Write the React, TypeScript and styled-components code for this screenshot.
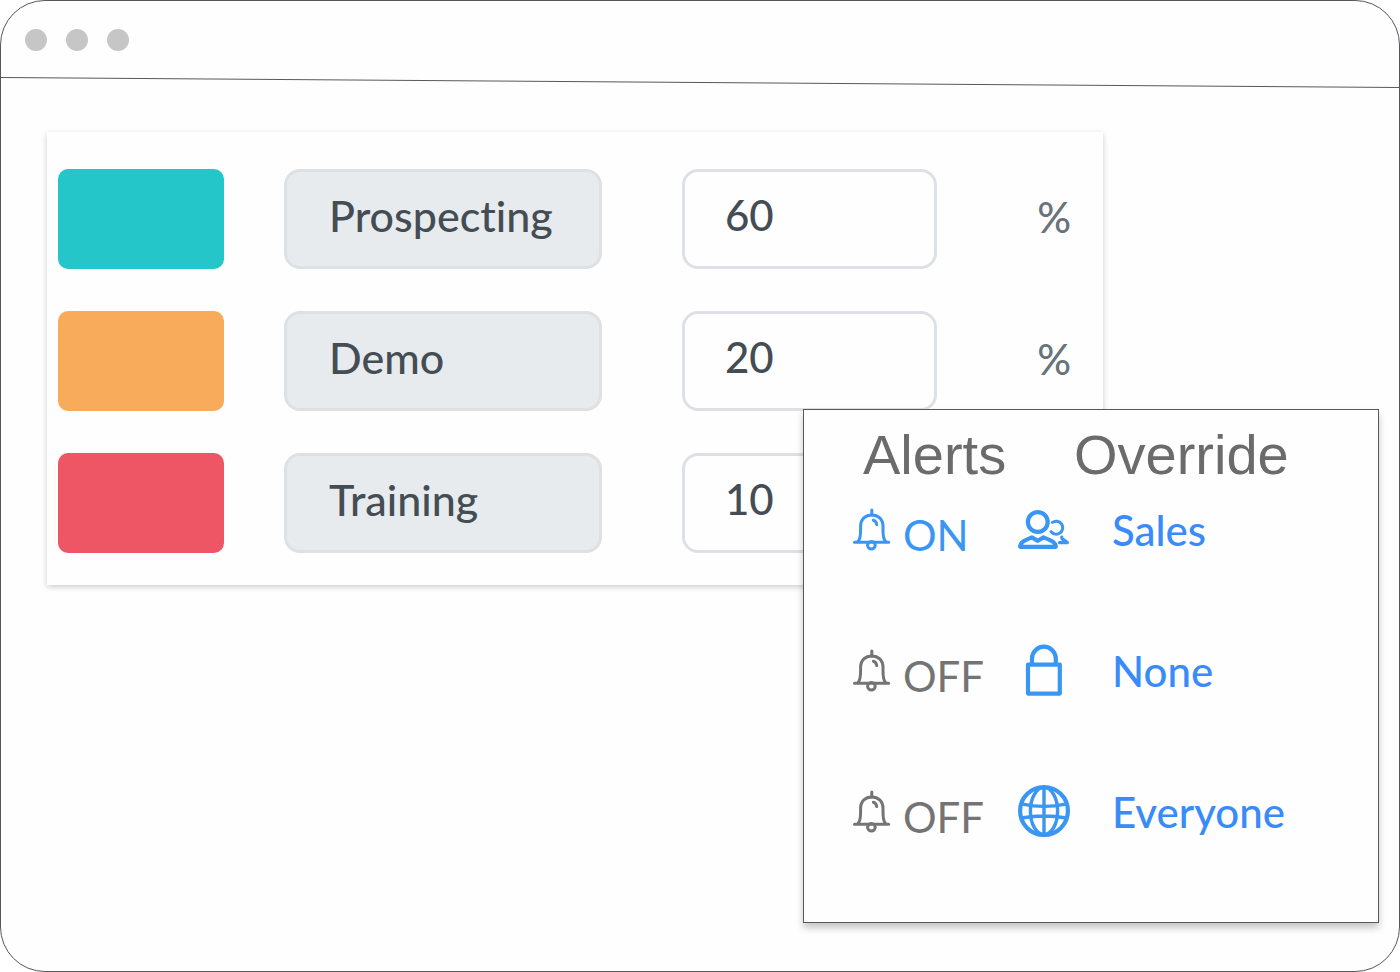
import React, { useState } from "react";
import styled, { createGlobalStyle } from "styled-components";

const GlobalStyle = createGlobalStyle`
  * { box-sizing: border-box; }
  body { margin: 0; background: #fff; }
  button, input { font: inherit; margin: 0; }
`;

const BLUE = "#3996f3";
const LINK = "#3a8bfa";
const GREY = "#747474";

const Window = styled.div`
  position: relative;
  display: flex;
  flex-direction: column;
  min-height: 100vh;
  border: 1px solid #58585a;
  border-radius: 45px;
  background: #fefefe;
  font-family: Lato, "Liberation Sans", sans-serif;
  font-size: 42px;
  line-height: 50px;
  overflow: hidden;
`;

const TitleBar = styled.header`
  display: flex;
  align-items: center;
  gap: 19px;
  height: 76px;
  padding: 2px 24px 0;
`;

const Dot = styled.span`
  width: 22px;
  height: 22px;
  border-radius: 50%;
  background: #c6c6c6;
`;

const Divider = styled.svg`
  display: block;
  width: 100%;
  height: 12px;
`;

const Content = styled.main`
  flex: 1;
  padding: 43px 296px 48px 46px;
`;

const StageCard = styled.section`
  display: flex;
  flex-direction: column;
  gap: 42px;
  padding: 37px 32px 32px 11px;
  background: #fefefe;
  box-shadow: 0 2px 6px rgba(0, 0, 0, 0.2);
`;

const StageRow = styled.div`
  display: grid;
  grid-template-columns: 166fr 338fr 275fr 54fr;
  column-gap: 60px;
  align-items: center;
`;

const Swatch = styled.button<{ $color: string }>`
  height: 100px;
  border: 0;
  border-radius: 10px;
  background: ${(p) => p.$color};
`;

const FieldCell = styled.div`
  padding-right: 20px;
`;

const Field = styled.input<{ $filled?: boolean }>`
  display: block;
  width: 100%;
  height: 100px;
  padding: 0 20px 8px ${(p) => (p.$filled ? "42px" : "40px")};
  border: 3px solid ${(p) => (p.$filled ? "#dde1e4" : "#dde1e6")};
  border-radius: 16px;
  background: ${(p) => (p.$filled ? "#e7ebee" : "#fefefe")};
  color: #454d54;
  font-size: ${(p) => (p.$filled ? "43px" : "42px")};
  font-weight: 500;
  font-variant-ligatures: none;
  outline: none;
`;

const Percent = styled.span`
  padding-bottom: 4px;
  color: #69737b;
  font-weight: 500;
  text-align: right;
`;

const AlertPanel = styled.aside`
  position: absolute;
  right: 20px;
  bottom: 48px;
  width: 576px;
  height: 514px;
  padding-top: 14px;
  border: 1px solid #58585a;
  background: #fefefe;
  box-shadow: 0 5px 7px rgba(0, 0, 0, 0.22);
`;

const AlertTable = styled.table`
  width: 100%;
  border-collapse: collapse;
  table-layout: fixed;
`;

const Head = styled.th<{ $width?: string; $indent: string }>`
  width: ${(p) => p.$width ?? "auto"};
  height: 64px;
  padding: 0 0 0 ${(p) => p.$indent};
  color: #6b6b6b;
  font: 400 56px/62px "Liberation Sans", Arial, sans-serif;
  text-align: left;
  vertical-align: top;
`;

const Cell = styled.td<{ $indent?: string }>`
  height: 141px;
  padding: 14px 0 0 ${(p) => p.$indent ?? "0"};
  vertical-align: top;
`;

const Toggle = styled.button<{ $on: boolean }>`
  display: flex;
  align-items: flex-start;
  gap: 12px;
  height: 64px;
  padding: 6px 0 0;
  border: 0;
  background: none;
  color: ${(p) => (p.$on ? BLUE : GREY)};
`;

const ToggleText = styled.span`
  padding-top: 2px;
`;

const Scope = styled.button`
  display: flex;
  align-items: flex-start;
  gap: 42px;
  height: 60px;
  padding: 1px 0 0;
  border: 0;
  background: none;
  color: ${LINK};
  font-weight: 500;
`;

const ScopeText = styled.span`
  padding-top: 2px;
`;

const Glyph = styled.svg`
  display: block;
  flex: none;
  fill: none;
  stroke: currentColor;
  stroke-linecap: round;
  stroke-linejoin: round;
`;

const ScopeGlyph = styled(Glyph)`
  color: ${BLUE};
`;

const Bell = () => (
  <Glyph width="38" height="44" viewBox="0 0 38 44" strokeWidth="3" aria-hidden="true">
    <path d="M18.8 2V7" />
    <path d="M5 33.6C7 31.5 7.6 28 7.6 22V18.5C7.6 11 12.5 7 18.8 7S30 11 30 18.5V22C30 28 30.6 31.5 32.6 33.6" />
    <path d="M1.5 34.2H35.6" />
    <circle cx="18.4" cy="37.2" r="3.8" />
    <path d="M20.4 12.2C22.4 12.8 23.4 14.3 23.7 16.6" />
  </Glyph>
);

const People = () => (
  <ScopeGlyph width="52" height="52" viewBox="0 -7 52 52" strokeWidth="4.2" aria-hidden="true">
    <circle cx="19.8" cy="12" r="9.9" />
    <path d="M2.2 36.8C2.2 32.6 5 31 13.8 27.4L19.8 30.8L25.6 27.4C34.6 31 37.8 32.6 37.8 36.8Z" />
    <path strokeWidth="3" d="M34.4 12.4A6.5 6.5 0 1 1 33 21.6" />
    <path strokeWidth="3.2" d="M43.8 27Q43.4 29 46 30L49.4 32.6H41.4" />
  </ScopeGlyph>
);

const Lock = () => (
  <ScopeGlyph width="52" height="52" viewBox="-7 0 52 52" strokeWidth="4.2" aria-hidden="true">
    <rect x="3" y="20.6" width="31.8" height="29" />
    <path d="M7 20V14.6A11.9 11.9 0 0 1 30.8 14.6V20" />
  </ScopeGlyph>
);

const Globe = () => (
  <ScopeGlyph width="52" height="52" viewBox="0 0 52 52" strokeWidth="3.4" aria-hidden="true">
    <circle cx="26" cy="26" r="23.9" strokeWidth="4.2" />
    <ellipse cx="26" cy="26" rx="13.6" ry="23.6" />
    <path d="M26 2V50M3.4 18.8Q26 24 48.6 18.8M3.4 33Q26 29 48.6 33" />
  </ScopeGlyph>
);

const stages = [
  { name: "Prospecting", share: "60", color: "#25c6c9" },
  { name: "Demo", share: "20", color: "#f9ab5c" },
  { name: "Training", share: "10", color: "#ee5565" },
];

const overrides = [
  { on: true, icon: <People />, label: "Sales" },
  { on: false, icon: <Lock />, label: "None" },
  { on: false, icon: <Globe />, label: "Everyone" },
];

export default function App() {
  const [shares, setShares] = useState(stages.map((s) => s.share));
  const [alerts, setAlerts] = useState(overrides.map((o) => o.on));

  return (
    <>
      <GlobalStyle />
      <Window>
        <TitleBar>
          <Dot />
          <Dot />
          <Dot />
        </TitleBar>
        <Divider viewBox="0 0 1400 12" preserveAspectRatio="none" aria-hidden="true">
          <path d="M0 0.5L1400 10.5" stroke="#58585a" strokeWidth="1" />
        </Divider>
        <Content>
          <StageCard>
            {stages.map((stage, i) => (
              <StageRow key={stage.name}>
                <Swatch type="button" $color={stage.color} aria-label={`${stage.name} colour`} />
                <FieldCell>
                  <Field $filled readOnly value={stage.name} aria-label="Stage" />
                </FieldCell>
                <FieldCell>
                  <Field
                    inputMode="numeric"
                    value={shares[i]}
                    aria-label={`${stage.name} percentage`}
                    onChange={(e) =>
                      setShares(shares.map((v, n) => (n === i ? e.target.value : v)))
                    }
                  />
                </FieldCell>
                <Percent>%</Percent>
              </StageRow>
            ))}
          </StageCard>
        </Content>
        <AlertPanel>
          <AlertTable>
            <thead>
              <tr>
                <Head $width="214px" $indent="59px">Alerts</Head>
                <Head $indent="56px">Override</Head>
              </tr>
            </thead>
            <tbody>
              {overrides.map((row, i) => (
                <tr key={row.label}>
                  <Cell $indent="49px">
                    <Toggle
                      type="button"
                      $on={alerts[i]}
                      aria-pressed={alerts[i]}
                      onClick={() => setAlerts(alerts.map((v, n) => (n === i ? !v : v)))}
                    >
                      <Bell />
                      <ToggleText>{alerts[i] ? "ON" : "OFF"}</ToggleText>
                    </Toggle>
                  </Cell>
                  <Cell>
                    <Scope type="button">
                      {row.icon}
                      <ScopeText>{row.label}</ScopeText>
                    </Scope>
                  </Cell>
                </tr>
              ))}
            </tbody>
          </AlertTable>
        </AlertPanel>
      </Window>
    </>
  );
}
